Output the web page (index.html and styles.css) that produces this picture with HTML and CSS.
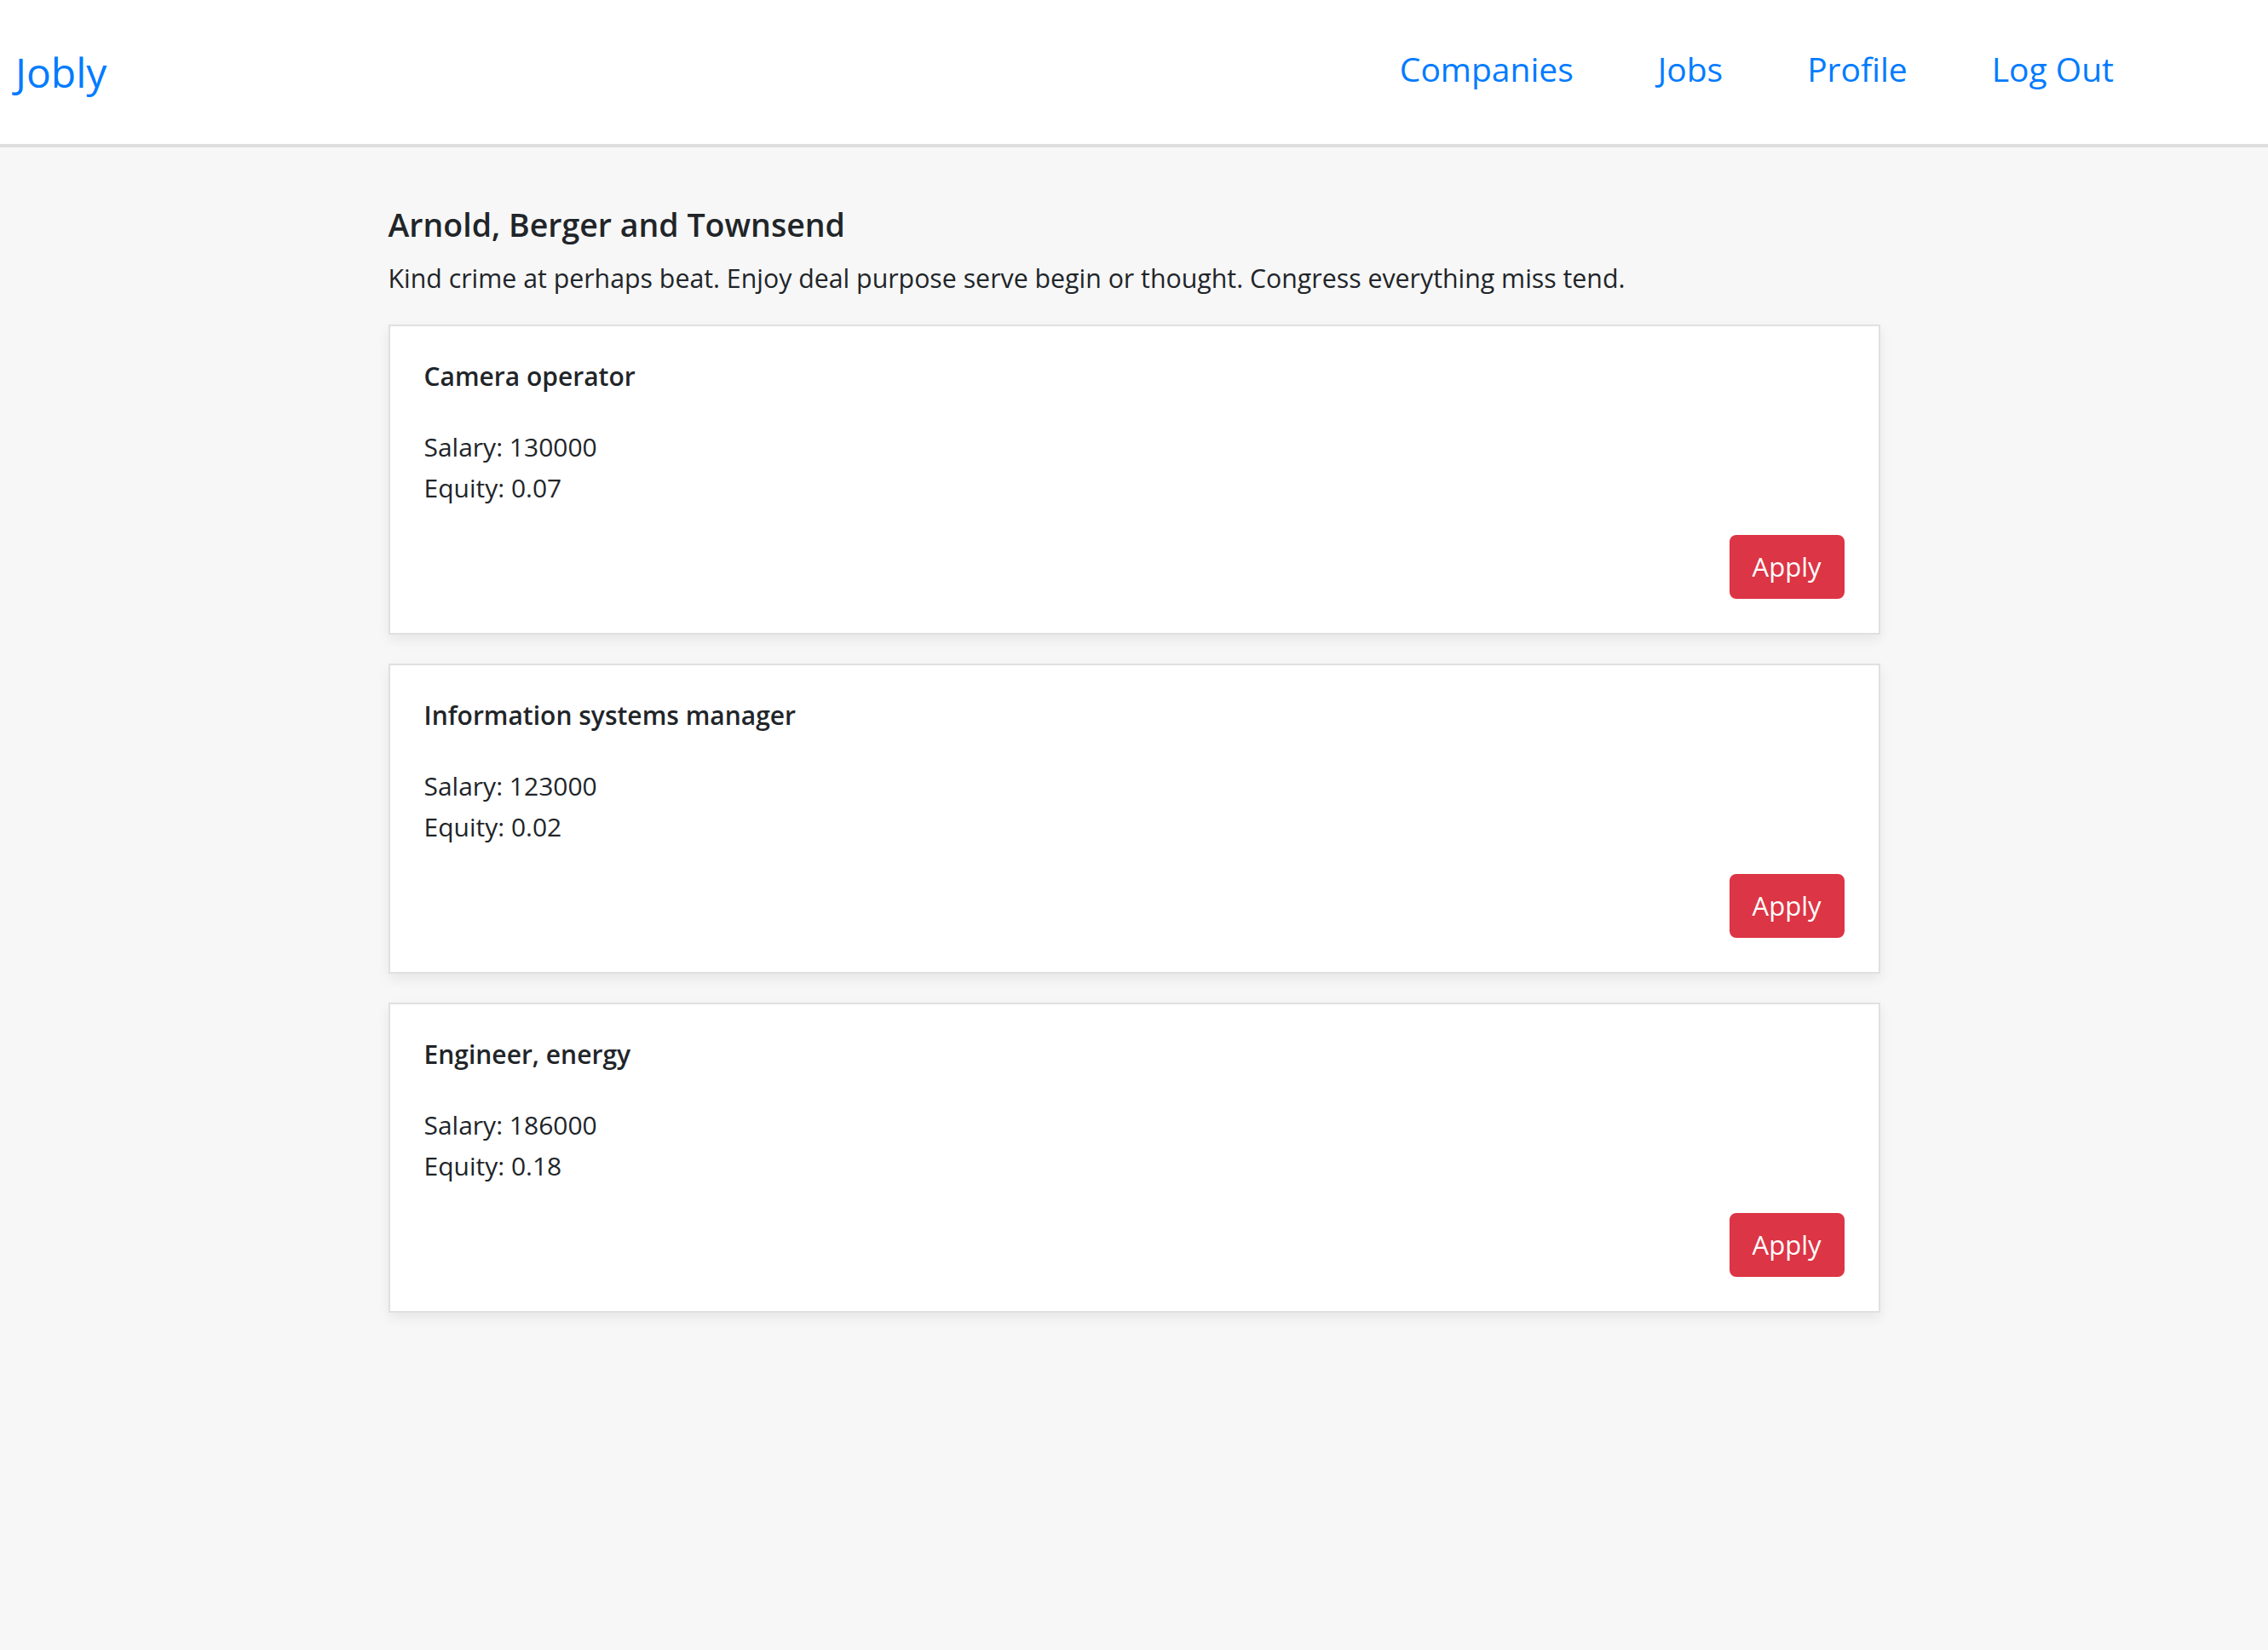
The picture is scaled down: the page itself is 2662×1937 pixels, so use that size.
FILE: index.html
```html
<!DOCTYPE html>
<html lang="en">
<head>
<meta charset="utf-8">
<title>Jobly</title>
<link rel="stylesheet" href="styles.css">
</head>
<body>
<nav class="navbar">
  <a class="brand" href="#">Jobly</a>
  <ul class="nav-links">
    <li><a href="#">Companies</a></li>
    <li><a href="#">Jobs</a></li>
    <li><a href="#">Profile</a></li>
    <li><a href="#">Log Out</a></li>
  </ul>
</nav>
<main class="page">
  <div class="column">
    <h5 class="company-name">Arnold, Berger and Townsend</h5>
    <p class="company-desc">Kind crime at perhaps beat. Enjoy deal purpose serve begin or thought. Congress everything miss tend.</p>

    <div class="card">
      <div class="card-body">
        <h6 class="card-title">Camera operator</h6>
        <div class="card-text">
          <div>Salary: 130000</div>
          <div>Equity: 0.07</div>
        </div>
        <div class="actions"><button class="btn-apply">Apply</button></div>
      </div>
    </div>

    <div class="card">
      <div class="card-body">
        <h6 class="card-title">Information systems manager</h6>
        <div class="card-text">
          <div>Salary: 123000</div>
          <div>Equity: 0.02</div>
        </div>
        <div class="actions"><button class="btn-apply">Apply</button></div>
      </div>
    </div>

    <div class="card">
      <div class="card-body">
        <h6 class="card-title">Engineer, energy</h6>
        <div class="card-text">
          <div>Salary: 186000</div>
          <div>Equity: 0.18</div>
        </div>
        <div class="actions"><button class="btn-apply">Apply</button></div>
      </div>
    </div>
  </div>
</main>
</body>
</html>
```
FILE: styles.css
```css
* { box-sizing: border-box; }

html, body {
  margin: 0;
  padding: 0;
}

body {
  background: #f7f7f7;
  color: #212529;
  font-family: "Open Sans", "Noto Sans", sans-serif;
  font-size: 30px;
  line-height: 48px;
  min-height: 1937px;
}

a { text-decoration: none; color: #007bff; }

.navbar {
  height: 173px;
  background: #ffffff;
  border-bottom: 4px solid #dedede;
  display: flex;
  align-items: center;
  justify-content: space-between;
  padding: 0 181px 0 18px;
}

.brand {
  font-size: 48px;
  line-height: 60px;
  margin-top: 0;
}

.nav-links {
  list-style: none;
  margin: 0;
  padding: 0 0 4px 0;
  display: flex;
  gap: 99px;
}

.nav-links a {
  font-size: 39px;
  line-height: 50px;
}

.page {
  padding-top: 68px;
}

.column {
  width: 1751px;
  margin: 0 auto;
}

.company-name {
  font-size: 37.5px;
  font-weight: 600;
  line-height: 45px;
  margin: 0 0 17px 0;
}

.company-desc {
  font-size: 30.3px;
  margin: 0 0 30px 0;
}

.card {
  background: #ffffff;
  border: 2px solid #e0e0e0;
  box-shadow: 0 6px 14px rgba(0, 0, 0, 0.07);
  margin-bottom: 34px;
}

.card-body {
  padding: 40px;
}

.card-title {
  font-size: 30px;
  font-weight: 600;
  line-height: 37px;
  margin: 0 0 41px 0;
}

.card-text {
  margin-bottom: 31px;
}

.actions {
  display: flex;
  justify-content: flex-end;
}

.btn-apply {
  font-family: "Open Sans", "Noto Sans", sans-serif;
  font-size: 31px;
  line-height: 47px;
  padding: 12px 25px;
  border: 2px solid #dc3545;
  border-radius: 8px;
  background: #dc3545;
  color: #ffffff;
  cursor: pointer;
}
```
